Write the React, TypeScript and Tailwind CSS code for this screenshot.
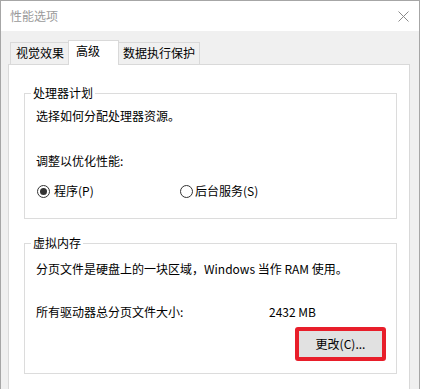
import React from "react";

function Radio({ checked }: { checked?: boolean }) {
  return (
    <span className="w-[13px] h-[13px] rounded-full border border-[#333333] bg-white flex items-center justify-center shrink-0">
      {checked && <span className="w-[7px] h-[7px] rounded-full bg-[#333333]" />}
    </span>
  );
}

export default function App() {
  return (
    <div className="w-[421px] h-[389px] overflow-hidden bg-white text-[12px] leading-[16px] text-black font-['Microsoft_YaHei','Noto_Sans_CJK_SC',sans-serif]">
      <div className="w-[420px] h-[420px] border-t border-l border-r border-[#a6a6a6] flex flex-col">
        {/* title bar */}
        <div className="h-[30px] bg-white flex items-center justify-between pl-[9px] pr-[10px] shrink-0">
          <span className="text-[#9a9a9a]">性能选项</span>
          <svg width="11" height="11" viewBox="0 0 11 11">
            <path d="M0.5 0.5 L10.5 10.5 M10.5 0.5 L0.5 10.5" stroke="#8a8a8a" strokeWidth="1" fill="none" />
          </svg>
        </div>
        {/* body */}
        <div className="flex-1 bg-[#f0f0f0] pl-[7px] pr-[9px] pt-[9px] flex flex-col">
          {/* tabs */}
          <div className="h-[24px] flex items-end pl-[2px] shrink-0">
            <div className="h-[22px] w-[58px] border-l border-t border-[#d9d9d9] bg-[#f0f0f0] pl-[5px] pt-[2px] whitespace-nowrap">
              视觉效果
            </div>
            <div className="relative z-10 h-[25px] w-[51px] -mb-[1px] border-l border-t border-r border-[#d9d9d9] bg-white pl-[7px] pt-[2px] whitespace-nowrap">
              高级
            </div>
            <div className="h-[22px] w-[81px] border-t border-r border-[#d9d9d9] bg-[#f0f0f0] pl-[4px] pt-[2px] whitespace-nowrap">
              数据执行保护
            </div>
          </div>
          {/* panel */}
          <div className="flex-1 bg-white border border-[#d9d9d9] pl-[15px] pr-[12px] pt-[20px]">
            <fieldset className="border border-[#dcdcdc] h-[134px] w-[373px]">
              <legend className="ml-[6px] px-[2px] leading-[16px]">处理器计划</legend>
              <div className="pl-[11px] pt-[7px]">
                <div>选择如何分配处理器资源。</div>
                <div className="mt-[29px]">调整以优化性能:</div>
                <div className="mt-[14px] flex items-center h-[16px]">
                  <div className="flex items-center gap-[4px] ml-[1px] w-[143px]">
                    <Radio checked />
                    <span>程序(P)</span>
                  </div>
                  <div className="flex items-center gap-[2px]">
                    <Radio />
                    <span>后台服务(S)</span>
                  </div>
                </div>
              </div>
            </fieldset>
            <fieldset className="border border-[#dcdcdc] mt-[16px] h-[139px] w-[373px]">
              <legend className="ml-[6px] px-[2px] leading-[16px]">虚拟内存</legend>
              <div className="pl-[11px] pt-[10px] pr-[10px]">
                <div className="whitespace-nowrap">分页文件是硬盘上的一块区域，Windows 当作 RAM 使用。</div>
                <div className="mt-[27px] flex">
                  <span className="w-[233px]">所有驱动器总分页文件大小:</span>
                  <span>2432 MB</span>
                </div>
                <div className="mt-[7px] flex justify-end">
                  <div className="border-[4px] border-[#e81e2a] rounded-[3px]">
                    <div className="w-[83px] h-[26px] bg-[#e1e1e1] flex items-center justify-center">
                      更改(C)...
                    </div>
                  </div>
                </div>
              </div>
            </fieldset>
          </div>
        </div>
      </div>
    </div>
  );
}
